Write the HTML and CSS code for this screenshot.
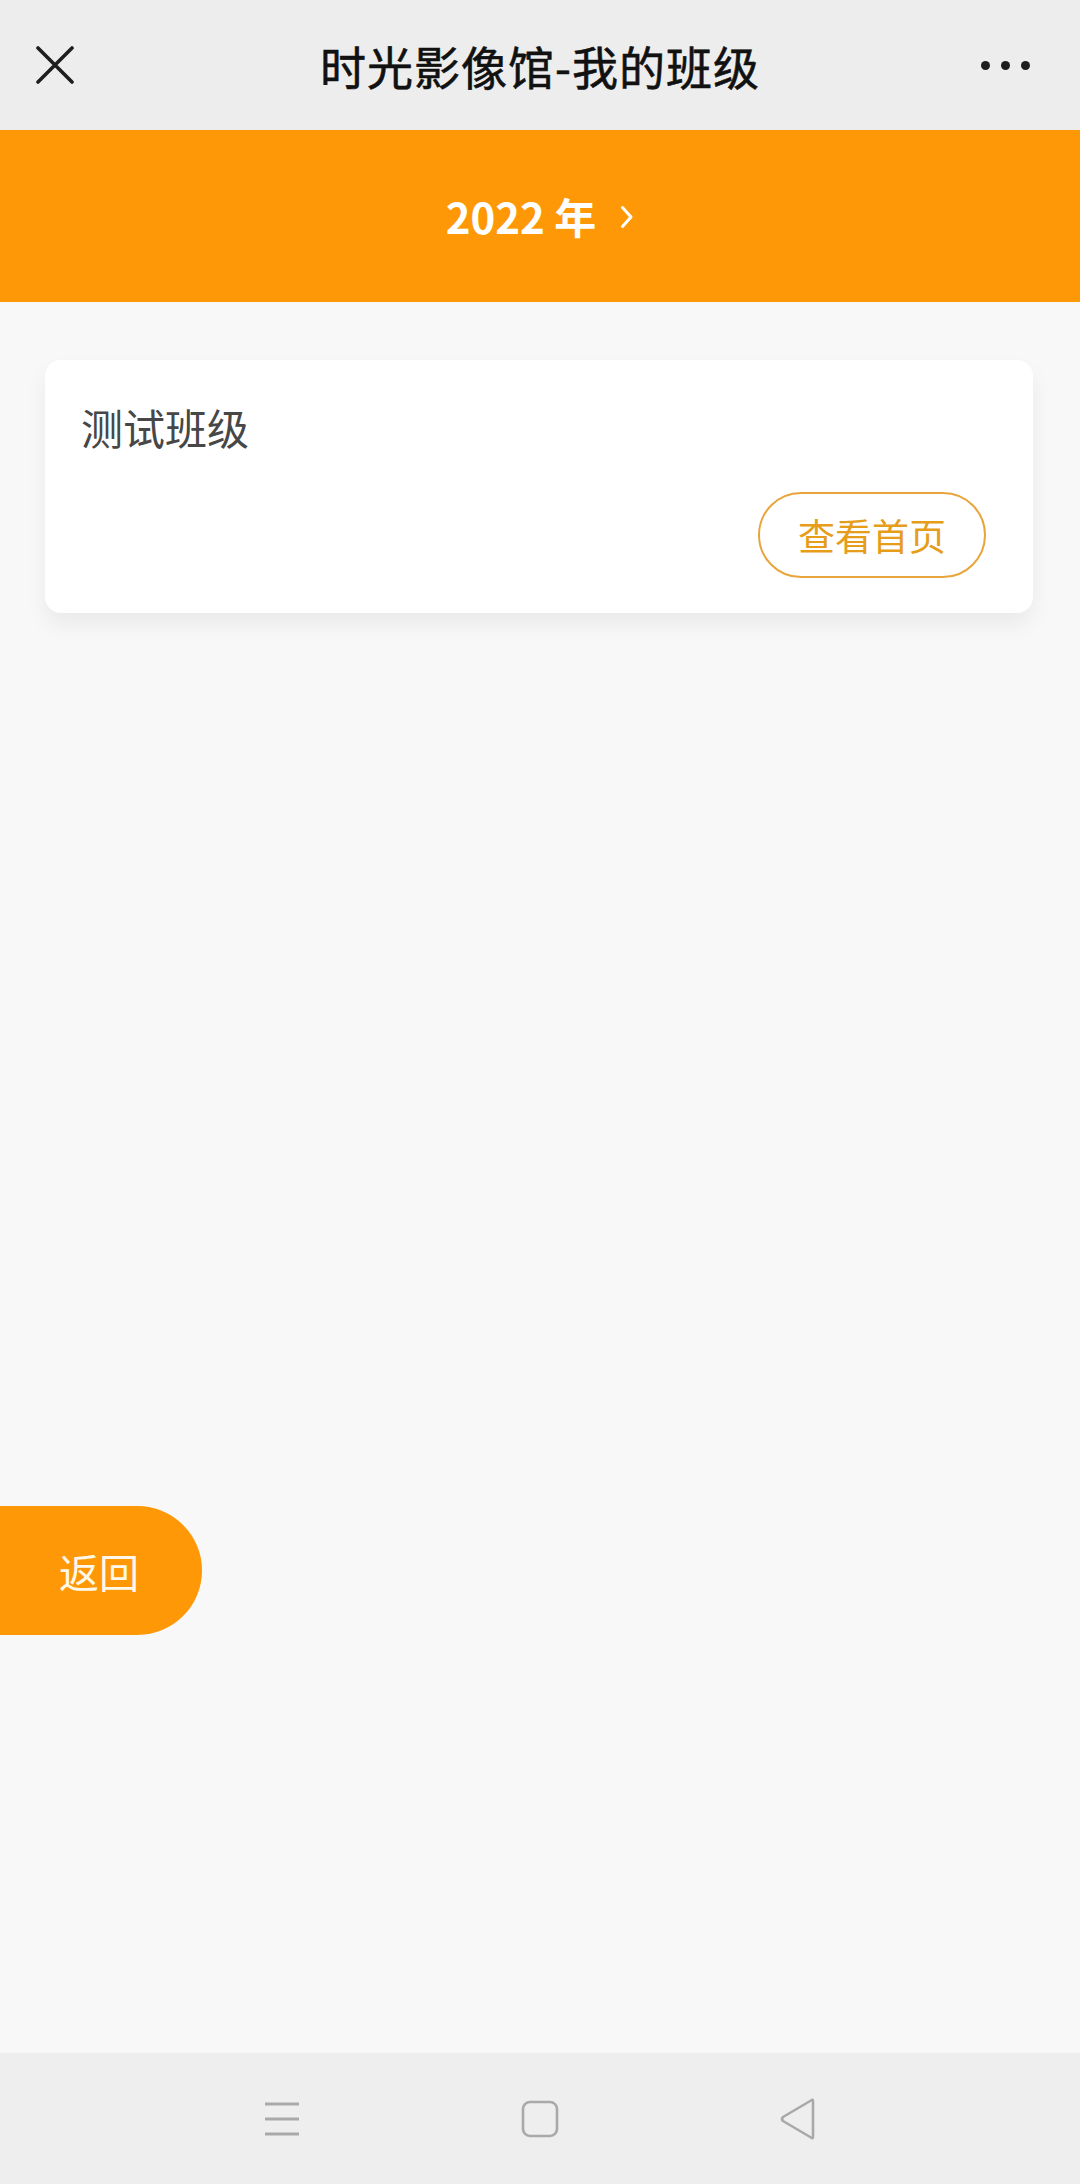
FILE: index.html
```html
<!DOCTYPE html>
<html lang="zh-CN">
<head>
<meta charset="utf-8">
<title>时光影像馆-我的班级</title>
<link rel="stylesheet" href="styles.css">
</head>
<body>
<div class="app">
  <header class="topbar">
    <div class="side side-left">
      <svg class="icon-close" width="38" height="38" viewBox="0 0 38 38">
        <path d="M2 2 L36 36 M36 2 L2 36" stroke="#1e1e1e" stroke-width="3.6" stroke-linecap="round" fill="none"/>
      </svg>
    </div>
    <div class="title">时光影像馆-我的班级</div>
    <div class="side side-right">
      <span class="dot"></span><span class="dot"></span><span class="dot"></span>
    </div>
  </header>

  <section class="banner">
    <span class="year">2022 年</span>
    <svg class="chev" width="14" height="24" viewBox="0 0 14 24">
      <path d="M2.5 2.5 L11 12 L2.5 21.5" stroke="#fff" stroke-width="3" stroke-linecap="round" stroke-linejoin="round" fill="none"/>
    </svg>
  </section>

  <main class="content">
    <div class="card">
      <div class="card-title">测试班级</div>
      <div class="card-actions">
        <button class="btn-outline">查看首页</button>
      </div>
    </div>
  </main>

  <nav class="sysnav">
    <svg class="nav-icon" width="38" height="36" viewBox="0 0 38 36">
      <path d="M2 3 H36 M2 18 H36 M2 33 H36" stroke="#a9a9a9" stroke-width="3" fill="none"/>
    </svg>
    <svg class="nav-icon" width="38" height="38" viewBox="0 0 38 38">
      <rect x="2" y="2" width="34" height="34" rx="7" ry="7" stroke="#a9a9a9" stroke-width="2.6" fill="none"/>
    </svg>
    <svg class="nav-icon" width="38" height="42" viewBox="0 0 38 42">
      <path d="M34 3 L34 39 Q34 41 32 39.5 L4 23 Q2 21 4 19 L32 2.5 Q34 1 34 3 Z" stroke="#a9a9a9" stroke-width="2.6" stroke-linejoin="round" fill="none"/>
    </svg>
  </nav>

  <button class="back-btn">返回</button>
</div>
</body>
</html>
```

FILE: styles.css
```css
* {
  box-sizing: border-box;
}

html, body {
  margin: 0;
  padding: 0;
}

body {
  font-family: "Noto Sans CJK SC", "Noto Sans", Roboto, sans-serif;
  background: #f8f8f8;
}

.app {
  position: relative;
  width: 1080px;
  height: 2184px;
  display: flex;
  flex-direction: column;
  overflow: hidden;
}

.topbar {
  height: 130px;
  flex: 0 0 130px;
  background: #ededed;
  display: flex;
  align-items: center;
}

.side {
  width: 130px;
  height: 100%;
  display: flex;
  align-items: center;
}

.side-left {
  padding-left: 36px;
}

.side-right {
  justify-content: flex-end;
  padding-right: 50px;
  gap: 11px;
}

.dot {
  width: 9px;
  height: 9px;
  border-radius: 50%;
  background: #1e1e1e;
}

.title {
  flex: 1;
  text-align: center;
  font-size: 46px;
  font-weight: 400;
  color: #111;
  letter-spacing: 1px;
  line-height: 1;
  -webkit-text-stroke: 0.6px #111;
}

.banner {
  height: 172px;
  flex: 0 0 172px;
  background: #fe9806;
  display: flex;
  align-items: center;
  justify-content: center;
  gap: 24px;
}

.year {
  color: #fff;
  font-family: "Noto Sans CJK SC", Roboto, sans-serif;
  font-weight: 700;
  font-size: 42px;
  line-height: 1;
}

.chev {
  margin-top: 2px;
}

.content {
  flex: 1;
  background: #f8f8f8;
  padding: 58px 47px 0 45px;
}

.card {
  background: #fff;
  border-radius: 16px;
  padding: 42px 47px 35px 36px;
  box-shadow: 0 12px 22px rgba(0, 0, 0, 0.06);
}

.card-title {
  font-size: 42px;
  line-height: 50px;
  color: #474747;
}

.card-actions {
  margin-top: 40px;
  display: flex;
  justify-content: flex-end;
}

.btn-outline {
  width: 228px;
  height: 86px;
  border: 2px solid #e7a53c;
  border-radius: 43px;
  background: #fff;
  color: #e59d1a;
  font-family: "Noto Sans CJK SC", sans-serif;
  font-size: 37px;
  padding: 0;
  line-height: 1;
}

.sysnav {
  height: 131px;
  flex: 0 0 131px;
  background: #eeeeee;
  display: flex;
  align-items: center;
  justify-content: center;
  gap: 220px;
}

.back-btn {
  position: absolute;
  left: 0;
  top: 1506px;
  width: 202px;
  height: 129px;
  border: none;
  border-radius: 0 65px 65px 0;
  background: #fe9806;
  color: #fff8ea;
  font-family: "Noto Sans CJK SC", sans-serif;
  font-size: 40px;
  padding: 0 4px 0 0;
  line-height: 1;
}
```
